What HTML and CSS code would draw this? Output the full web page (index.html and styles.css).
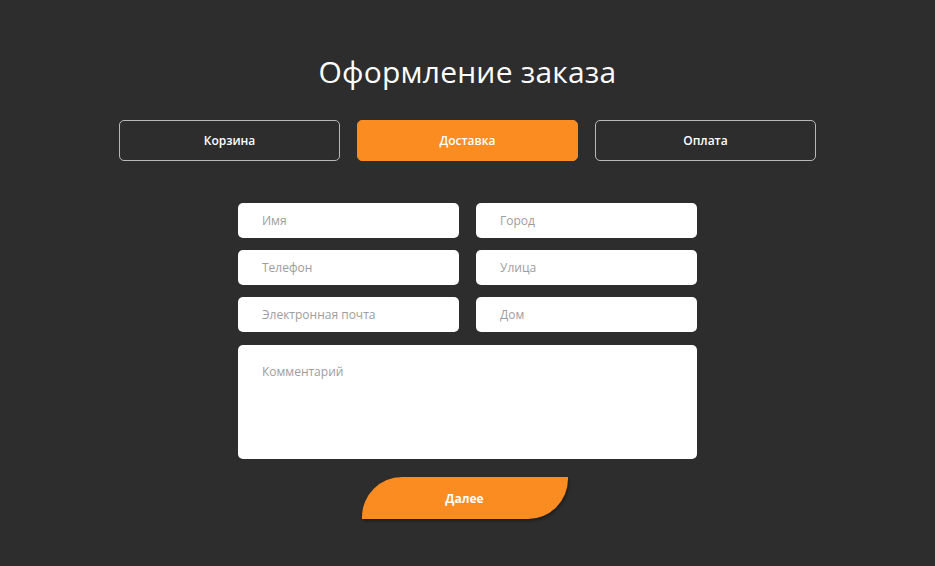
FILE: index.html
```html
<!DOCTYPE html>
<html lang="ru">
<head>
<meta charset="utf-8">
<title>Оформление заказа</title>
<link rel="stylesheet" href="styles.css">
</head>
<body>
<main class="page">
  <h1 class="title">Оформление заказа</h1>
  <nav class="steps">
    <div class="step">Корзина</div>
    <div class="step step-active">Доставка</div>
    <div class="step">Оплата</div>
  </nav>
  <form class="form">
    <div class="grid">
      <input class="field" type="text" placeholder="Имя">
      <input class="field" type="text" placeholder="Город">
      <input class="field" type="text" placeholder="Телефон">
      <input class="field" type="text" placeholder="Улица">
      <input class="field" type="text" placeholder="Электронная почта">
      <input class="field" type="text" placeholder="Дом">
      <textarea class="field comment" placeholder="Комментарий"></textarea>
    </div>
    <button class="next" type="button">Далее</button>
  </form>
</main>
</body>
</html>
```
FILE: styles.css
```css
* { box-sizing: border-box; }
html, body {
  margin: 0;
  padding: 0;
  background: #2d2d2d;
  font-family: "Open Sans", "Noto Sans", sans-serif;
}
.page {
  width: 935px;
  height: 566px;
  padding-top: 50px;
  display: flex;
  flex-direction: column;
  align-items: center;
}
.title {
  margin: 0;
  color: #ffffff;
  font-size: 30px;
  font-weight: 400;
  line-height: 44px;
  letter-spacing: 0.2px;
}
.steps {
  margin-top: 26px;
  display: flex;
  gap: 17px;
}
.step {
  width: 221px;
  height: 41px;
  border: 1px solid #b8b8b8;
  border-radius: 5px;
  color: #ffffff;
  font-size: 12px;
  font-weight: 600;
  display: flex;
  align-items: center;
  justify-content: center;
}
.step-active {
  background: #fa8c22;
  border-color: #fa8c22;
}
.form {
  margin-top: 42px;
  display: flex;
  flex-direction: column;
  align-items: center;
}
.grid {
  display: grid;
  grid-template-columns: 221px 221px;
  column-gap: 17px;
  row-gap: 12px;
}
.field {
  height: 35px;
  border: none;
  border-radius: 5px;
  background: #ffffff;
  padding: 0 24px;
  font-family: "Open Sans", "Noto Sans", sans-serif;
  font-size: 12px;
  color: #333;
  outline: none;
}
.field::placeholder { color: #9d9d9d; }
.comment {
  grid-column: 1 / 3;
  height: 114px;
  padding: 18px 24px;
  resize: none;
  margin-top: 1px;
}
.next {
  margin-top: 18px;
  margin-left: -6px;
  width: 206px;
  height: 42px;
  border: none;
  background: #fa8c22;
  color: #ffffff;
  font-family: "Open Sans", "Noto Sans", sans-serif;
  font-size: 12px;
  font-weight: 700;
  border-radius: 40px 0 40px 0;
  box-shadow: 1px 2px 3px rgba(0, 0, 0, 0.35);
  cursor: pointer;
}
```
